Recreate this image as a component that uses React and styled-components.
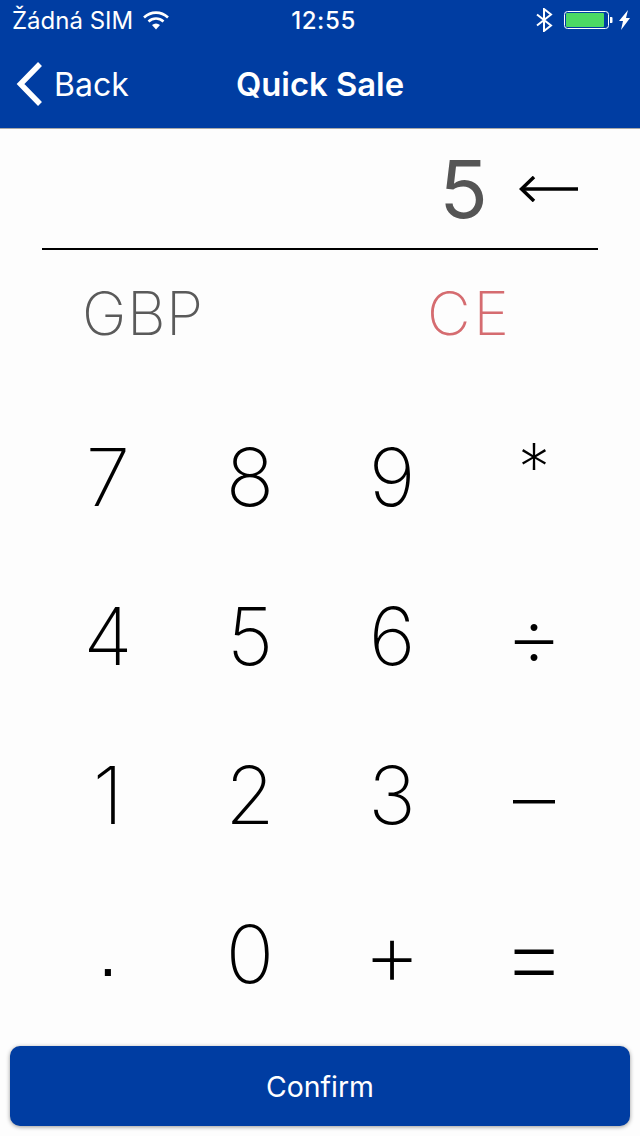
import React from 'react';
import styled, { createGlobalStyle } from 'styled-components';

const GlobalStyle = createGlobalStyle`
	html, body {
		margin: 0;
		padding: 0;
		background: #fdfdfd;
	}
`

const Page = styled.div`
	width: 640px;
	height: 1136px;
	display: flex;
	flex-direction: column;
	overflow: hidden;
	font-family: Inter, "Liberation Sans", sans-serif;
	background: #fdfdfd;
`

const Header = styled.div`
	height: 129px;
	background: #003da2;
	color: #fff;
	border-bottom: 1px solid #a9a9a9;
	box-sizing: border-box;
`

const StatusBar = styled.div`
	height: 40px;
	display: grid;
	grid-template-columns: 1fr auto 1fr;
	align-items: center;
	padding: 0 10px 0 12px;
	font-size: 24px;
`

const StatusLeft = styled.div`
	display: flex;
	align-items: center;
	gap: 10px;
`

const StatusRight = styled.div`
	display: flex;
	align-items: center;
	justify-content: flex-end;
	gap: 11px;
`

const Time = styled.div`
	font-weight: 500;
	letter-spacing: 0.6px;
	margin-left: 5px;
`

const NavBar = styled.div`
	height: 88px;
	display: grid;
	grid-template-columns: 1fr auto 1fr;
	align-items: center;
`

const BackLink = styled.div`
	display: flex;
	align-items: center;
	font-size: 32px;
	gap: 11px;
	padding-left: 16px;
`

const Title = styled.div`
	font-size: 32.8px;
	font-weight: 600;
`

const Display = styled.div`
	height: 119px;
	margin: 0 42px;
	display: flex;
	align-items: center;
	justify-content: flex-end;
	gap: 31px;
	padding-right: 20px;
	border-bottom: 2px solid #000;
`

const Amount = styled.div`
	font-size: 80px;
	font-weight: 400;
	color: #555;
`

const ActionRow = styled.div`
	display: grid;
	grid-template-columns: 1fr 1fr;
	height: 126px;
	align-items: center;
	padding-left: 82px;
	font-size: 60px;
	font-weight: 200;
`

const Action = styled.div`
	color: ${props => props.color};
	margin-left: ${props => props.offset || 0}px;
	letter-spacing: ${props => props.spacing}px;
`

const Keys = styled.div`
	flex: 1;
	display: grid;
	grid-template-columns: repeat(4, 142px);
	grid-auto-rows: 159px;
	padding: 21px 37px 0;
`

const Key = styled.div`
	display: flex;
	align-items: center;
	justify-content: center;
	font-family: ${props => props.family || 'inherit'};
	font-size: ${props => props.size || 80}px;
	font-weight: ${props => props.weight || 200};
	color: #000;
	padding-top: ${props => props.drop || 0}px;
	padding-bottom: ${props => props.lift || 0}px;
`

const ConfirmButton = styled.div`
	margin: 0 10px 10px;
	height: 80px;
	border-radius: 10px;
	background: #003da2;
	color: #fff;
	font-size: 28.4px;
	display: flex;
	align-items: center;
	justify-content: center;
	box-shadow: 0 1px 4px rgba(0, 0, 0, 0.4);
`

const keys = [
	{ label: '7' },
	{ label: '8' },
	{ label: '9' },
	{ label: '*', size: 64, lift: 20 },
	{ label: '4' },
	{ label: '5' },
	{ label: '6' },
	{ label: '÷', size: 90 },
	{ label: '1' },
	{ label: '2' },
	{ label: '3' },
	{ label: '–', size: 84, drop: 6 },
	{ label: '.', family: '"Liberation Sans", sans-serif', size: 64, weight: 400 },
	{ label: '0' },
	{ label: '+', size: 90 },
	{ label: '=', size: 105, weight: 155 },
];

const WifiIcon = () => (
	<svg width="26" height="20" viewBox="0 0 26 20" fill="none" stroke="#fff" strokeWidth="2.6">
		<path d="M1 7.5C8 1 18 1 25 7.5" />
		<path d="M5.5 11.5C10 7.5 16 7.5 20.5 11.5" />
		<path d="M13 19.5L9 15C11.500 13 14.500 13 17 15Z" fill="#fff" stroke="none" />
	</svg>
)

const BluetoothIcon = () => (
	<svg width="17" height="24" viewBox="0 0 17 24" fill="none" stroke="#fff" strokeWidth="2">
		<path d="M1 6.500L15 17.500L8 23V1L15 6.500L1 17.500" />
	</svg>
)

const BatteryIcon = () => (
	<svg width="66" height="20" viewBox="0 0 66 20">
		<rect x="0.5" y="1.500" width="44" height="17" rx="3" fill="none" stroke="#fff" />
		<rect x="2" y="3" width="38" height="14" rx="1" fill="#4cd964" />
		<path d="M46 7h1.500a1 1 0 0 1 1 1v4a1 1 0 0 1-1 1H46z" fill="#fff" />
		<path d="M64 0L55 11h4l-2 9 9-12h-4z" fill="#fff" />
	</svg>
)

const BackChevron = () => (
	<svg width="27" height="44" viewBox="0 0 27 44" fill="none" stroke="#fff" strokeWidth="5.500">
		<path d="M24 2L4.500 22L24 42" />
	</svg>
)

const BackArrow = () => (
	<svg width="59" height="26" viewBox="0 0 59 26" fill="none" stroke="#000" strokeWidth="3.500">
		<path d="M59 13H3" />
		<path d="M15 1L2.500 13L15 25" />
	</svg>
)

const App = () => (
	<Page>
		<GlobalStyle />
		<Header>
			<StatusBar>
				<StatusLeft>
					Žádná SIM
					<WifiIcon />
				</StatusLeft>
				<Time>12:55</Time>
				<StatusRight>
					<BluetoothIcon />
					<BatteryIcon />
				</StatusRight>
			</StatusBar>
			<NavBar>
				<BackLink>
					<BackChevron />
					Back
				</BackLink>
				<Title>Quick Sale</Title>
			</NavBar>
		</Header>
		<Display>
			<Amount>5</Amount>
			<BackArrow />
		</Display>
		<ActionRow>
			<Action color="#5a5a5a" spacing={0.5}>GBP</Action>
			<Action color="#d56c70" offset={66} spacing={3}>CE</Action>
		</ActionRow>
		<Keys>
			{keys.map(k => (
				<Key key={k.label} size={k.size} drop={k.drop} lift={k.lift} family={k.family} weight={k.weight}>
					{k.label}
				</Key>
			))}
		</Keys>
		<ConfirmButton>Confirm</ConfirmButton>
	</Page>
);

export default App;
